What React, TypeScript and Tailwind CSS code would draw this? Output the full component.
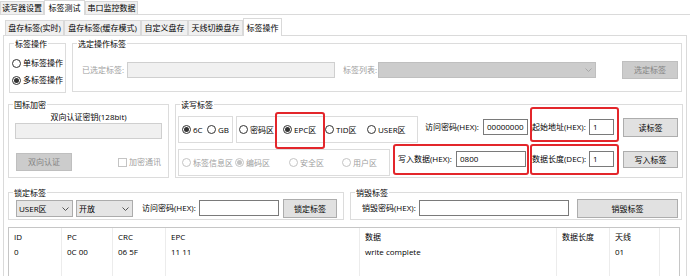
import React from 'react';

type Kids = { children?: React.ReactNode };

function TopTab({ w, active, children }: Kids & { w: string; active?: boolean }) {
  return (
    <div
      className={`${w} flex items-center justify-center border border-b-0 border-[#d9d9d9] ${
        active ? 'relative -mb-px h-[15px] bg-white' : 'h-[13px] bg-[#f0f0f0]'
      }`}
    >
      {children}
    </div>
  );
}

function SubTab({ w, active, children }: Kids & { w: string; active?: boolean }) {
  return (
    <div
      className={`${w} flex items-center justify-center border border-b-0 border-[#d9d9d9] ${
        active ? 'relative -mb-px h-[18px] bg-white' : 'h-[15px] bg-[#f0f0f0]'
      }`}
    >
      {children}
    </div>
  );
}

function Group({ title, className, children }: Kids & { title: string; className: string }) {
  return (
    <div className={`relative border border-[#dcdcdc] ${className}`}>
      <span className="absolute -top-[5px] left-[4px] bg-white px-[1px] leading-[9px]">{title}</span>
      {children}
    </div>
  );
}

function Radio({ label, checked, disabled, w = '' }: { label: string; checked?: boolean; disabled?: boolean; w?: string }) {
  return (
    <div className={`flex h-[12px] items-center gap-[2px] ${w} ${disabled ? 'text-[#a0a0a0]' : 'text-black'}`}>
      <span
        className={`flex h-[9px] w-[9px] shrink-0 items-center justify-center rounded-full border bg-white ${
          disabled ? 'border-[#c4c4c4]' : 'border-[#333333]'
        }`}
      >
        {checked && <span className={`h-[5px] w-[5px] rounded-full ${disabled ? 'bg-[#c4c4c4]' : 'bg-[#333333]'}`} />}
      </span>
      <span className="whitespace-nowrap">{label}</span>
    </div>
  );
}

function Label({ className, children }: Kids & { className: string }) {
  return <div className={`flex h-[16px] items-center whitespace-nowrap ${className}`}>{children}</div>;
}

function TextBox({ className, value, disabled }: { className: string; value?: string; disabled?: boolean }) {
  return (
    <div
      className={`flex h-[16px] items-center border pl-[3px] ${
        disabled ? 'border-[#cfcfcf] bg-[#f0f0f0]' : 'border-[#7a7a7a] bg-white'
      } ${className}`}
    >
      {value}
    </div>
  );
}

function Button({ className, disabled, children }: Kids & { className: string; disabled?: boolean }) {
  return (
    <div
      className={`flex items-center justify-center border ${
        disabled ? 'border-[#bfbfbf] bg-[#cccccc] text-[#838383]' : 'border-[#adadad] bg-[#e1e1e1] text-black'
      } ${className}`}
    >
      {children}
    </div>
  );
}

function Chevron({ color }: { color: string }) {
  return (
    <svg width="7" height="4" viewBox="0 0 7 4" className="mr-[3px]">
      <polyline points="0.5,0.5 3.5,3.5 6.5,0.5" fill="none" stroke={color} strokeWidth="1" />
    </svg>
  );
}

function Combo({ className, value, disabled }: { className: string; value?: string; disabled?: boolean }) {
  return (
    <div
      className={`flex items-center justify-between border pl-[2px] ${
        disabled ? 'border-[#bfbfbf] bg-[#cccccc]' : 'border-[#acacac] bg-[#e5e5e5]'
      } ${className}`}
    >
      <span>{value}</span>
      <Chevron color={disabled ? '#a8a8a8' : '#555555'} />
    </div>
  );
}

const columns = [
  { w: 'w-[53px]', head: 'ID', cell: '0' },
  { w: 'w-[51px]', head: 'PC', cell: '0C 00' },
  { w: 'w-[53px]', head: 'CRC', cell: '06 5F' },
  { w: 'w-[194px]', head: 'EPC', cell: '11 11' },
  { w: 'w-[197px]', head: '数据', cell: 'write complete' },
  { w: 'w-[53px]', head: '数据长度', cell: '' },
  { w: 'w-[50px]', head: '天线', cell: '01' },
];

export default function App() {
  return (
    <div className="h-[276px] w-[690px] overflow-hidden bg-white text-[8px] leading-none text-black font-['Open_Sans','Noto_Sans_CJK_SC',sans-serif]">
      <div className="flex h-[15px] items-end border-b border-[#dadada]">
        <TopTab w="w-[44px]">读写器设置</TopTab>
        <TopTab w="w-[41px]" active>
          标签测试
        </TopTab>
        <TopTab w="w-[53px]">串口监控数据</TopTab>
      </div>

      <div className="ml-[3px] w-[684px] pt-[3px]">
        <div className="flex h-[18px] items-end border-b border-[#dadada] pl-[2px]">
          <SubTab w="w-[59px]">盘存标签(实时)</SubTab>
          <SubTab w="w-[77px]">盘存标签(缓存模式)</SubTab>
          <SubTab w="w-[47px]">自定义盘存</SubTab>
          <SubTab w="w-[55px]">天线切换盘存</SubTab>
          <SubTab w="w-[39px]" active>
            标签操作
          </SubTab>
        </div>

        <div className="relative h-[240px] border-x border-[#dadada]">
          {/* row 1 */}
          <div className="flex pl-[5px] pt-[7px]">
            <Group title="标签操作" className="h-[50px] w-[57px]">
              <div className="flex flex-col gap-[5px] pl-[2px] pt-[13px]">
                <Radio label="单标签操作" />
                <Radio label="多标签操作" checked />
              </div>
            </Group>
            <Group title="选定操作标签" className="ml-[6px] h-[49px] w-[610px]">
              <div className="flex items-center pl-[9px] pt-[17px] text-[#a0a0a0]">
                <Label className="w-[45px]">已选定标签:</Label>
                <TextBox className="w-[208px]" disabled />
                <Label className="ml-[8px] w-[35px]">标签列表:</Label>
                <Combo className="h-[16px] w-[218px]" disabled />
                <Button className="ml-[26px] h-[18px] w-[56px]" disabled>
                  选定标签
                </Button>
              </div>
            </Group>
          </div>

          {/* row 2 */}
          <div className="mt-[11px] flex pl-[4px]">
            <Group title="国标加密" className="h-[74px] w-[161px]">
              <div className="pt-[7px] text-center leading-[10px]">双向认证密钥(128bit)</div>
              <TextBox className="ml-[6px] mt-[1px] w-[147px]" disabled />
              <div className="mt-[14px] flex items-center">
                <Button className="ml-[7px] h-[18px] w-[56px]" disabled>
                  双向认证
                </Button>
                <span className="ml-[46px] h-[9px] w-[9px] border border-[#c4c4c4] bg-white" />
                <span className="ml-[2px] text-[#a0a0a0]">加密通讯</span>
              </div>
            </Group>

            <Group title="读写标签" className="ml-[6px] h-[74px] w-[508px]">
              <div className="flex items-start pl-[2px] pt-[11px]">
                <div className="flex h-[27px] w-[55px] items-center border border-[#dcdcdc] pl-[3px]">
                  <Radio label="6C" checked w="w-[25px]" />
                  <Radio label="GB" />
                </div>
                <div className="ml-[3px] flex h-[27px] w-[182px] items-center border border-[#dcdcdc] pl-[2px]">
                  <Radio label="密码区" w="w-[44px]" />
                  <Radio label="EPC区" checked w="w-[42px]" />
                  <Radio label="TID区" w="w-[42px]" />
                  <Radio label="USER区" />
                </div>
                <Label className="ml-[7px] mt-[3px] w-[58px]">访问密码(HEX):</Label>
                <TextBox className="mt-[3px] w-[45px]" value="00000000" />
                <Label className="ml-[4px] mt-[3px] w-[57px]">起始地址(HEX):</Label>
                <TextBox className="mt-[3px] w-[25px]" value="1" />
                <Button className="ml-[9px] mt-[2px] h-[19px] w-[55px]">读标签</Button>
              </div>
              <div className="mt-[6px] flex items-start pl-[2px]">
                <div className="flex h-[27px] w-[212px] items-center border border-[#dcdcdc] pl-[3px]">
                  <Radio label="标签信息区" disabled w="w-[53px]" />
                  <Radio label="编码区" checked disabled w="w-[54px]" />
                  <Radio label="安全区" disabled w="w-[53px]" />
                  <Radio label="用户区" disabled />
                </div>
                <Label className="ml-[8px] mt-[2px] w-[58px]">写入数据(HEX):</Label>
                <TextBox className="mt-[2px] w-[70px]" value="0800" />
                <Label className="ml-[6px] mt-[2px] w-[57px]">数据长度(DEC):</Label>
                <TextBox className="mt-[2px] w-[25px]" value="1" />
                <Button className="ml-[9px] mt-[2px] h-[17px] w-[55px]">写入标签</Button>
              </div>
            </Group>
          </div>

          {/* row 3 */}
          <div className="mt-[14px] flex pl-[4px]">
            <Group title="锁定标签" className="h-[28px] w-[336px]">
              <div className="flex items-start pl-[7px] pt-[7px]">
                <Combo className="h-[17px] w-[57px]" value="USER区" />
                <Combo className="ml-[3px] h-[17px] w-[57px]" value="开放" />
                <Label className="ml-[9px] w-[57px]">访问密码(HEX):</Label>
                <TextBox className="w-[80px]" />
                <Button className="-mt-[1px] ml-[4px] h-[19px] w-[54px]">锁定标签</Button>
              </div>
            </Group>
            <Group title="销毁标签" className="ml-[6px] h-[28px] w-[332px]">
              <div className="flex items-start pl-[11px] pt-[7px]">
                <Label className="w-[57px]">销毁密码(HEX):</Label>
                <TextBox className="w-[150px]" />
                <Button className="-mt-[1px] ml-[8px] h-[19px] w-[101px]">销毁标签</Button>
              </div>
            </Group>
          </div>

          {/* result list */}
          <div className="ml-[4px] mt-[7px] flex h-[60px] w-[672px] border border-[#c6c6c6]">
            {columns.map((c) => (
              <div key={c.head} className={`flex flex-col border-r border-[#ececec] pt-[1px] ${c.w}`}>
                <div className="flex h-[15px] items-center whitespace-nowrap pl-[5px]">{c.head}</div>
                <div className="flex h-[15px] items-center whitespace-nowrap pl-[5px]">{c.cell}</div>
              </div>
            ))}
          </div>

          {/* red highlight annotations */}
          <div className="absolute left-[271px] top-[76px] h-[37px] w-[50px] rounded-[3px] border-2 border-[#e3262b]" />
          <div className="absolute left-[526px] top-[71px] h-[35px] w-[89px] rounded-[3px] border-2 border-[#e3262b]" />
          <div className="absolute left-[389px] top-[108px] h-[31px] w-[136px] rounded-[3px] border-2 border-[#e3262b]" />
          <div className="absolute left-[526px] top-[108px] h-[31px] w-[89px] rounded-[3px] border-2 border-[#e3262b]" />
        </div>
      </div>
    </div>
  );
}
